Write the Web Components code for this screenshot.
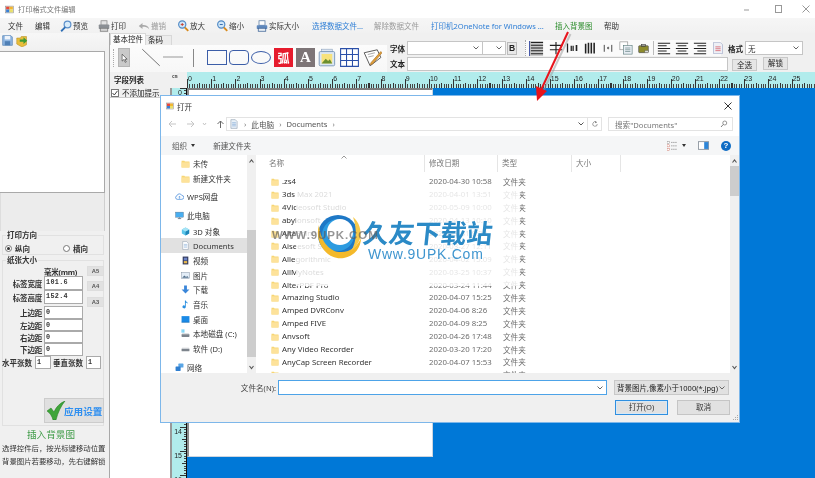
<!DOCTYPE html>
<html lang="zh">
<head>
<meta charset="utf-8">
<title>打印格式文件编辑</title>
<style>
    html, body { margin: 0; padding: 0; width: 815px; height: 478px; overflow: hidden; background: #fff; }
</style>
</head>
<body>
<app-window>
    <title-bar slot="top"></title-bar>
    <menu-bar slot="top">
        <menu-item w="27">文件</menu-item>
        <menu-item w="25">编辑</menu-item>
        <menu-item w="38" icon="glass">预览</menu-item>
        <menu-item w="40" icon="printer">打印</menu-item>
        <menu-item w="39" icon="undo" tone="off">撤销</menu-item>
        <menu-item w="39" icon="zoomin">放大</menu-item>
        <menu-item w="40" icon="zoomout">缩小</menu-item>
        <menu-item w="56" icon="actual">实际大小</menu-item>
        <menu-item w="62" tone="link">选择数据文件...</menu-item>
        <menu-item w="57" tone="off">解除数据文件</menu-item>
        <menu-item w="124" tone="link">打印机2OneNote for Windows ...</menu-item>
        <menu-item w="49" tone="go">插入背景图</menu-item>
        <menu-item w="30">帮助</menu-item>
    </menu-bar>
    <side-panel slot="side"></side-panel>
    <tool-strip slot="main"></tool-strip>
    <ruler-row slot="main"></ruler-row>
    <work-area slot="main"></work-area>
    <open-dialog slot="over"></open-dialog>
    <site-watermark slot="over"></site-watermark>
    <red-arrow slot="over"></red-arrow>
</app-window>

<script>
const FONT = `"Noto Sans", "Noto Sans CJK SC", sans-serif`;

// all the little pictures of the app, viewBox 0 0 16 16
const ICONS = {
    appicon: `<rect x="1" y="2" width="14" height="12" fill="#eee" stroke="#888"/><rect x="2" y="3" width="6" height="5" fill="#e8493a"/><rect x="8" y="3" width="6" height="5" fill="#f2b632"/><rect x="2" y="8" width="6" height="5" fill="#3a7fd5"/><rect x="8" y="8" width="6" height="5" fill="#e9e06a"/>`,
    glass: `<circle cx="10" cy="6" r="4.5" fill="#d7ebfa" stroke="#5b8fc9" stroke-width="1.6"/><path d="M7 9.5 1.5 15" stroke="#2f6fb5" stroke-width="2.4"/>`,
    printer: `<rect x="4" y="1" width="8" height="6" fill="#e4e4e4" stroke="#888"/><rect x="1" y="6" width="14" height="6" rx="1" fill="#8b8f94"/><rect x="3" y="11" width="10" height="4" fill="#d5d5d5" stroke="#777"/>`,
    undo: `<path d="M1 8 6 4v2.5c5 0 8 1.5 9 6-2-3-5-3.5-9-3.5V12z" fill="#a9a9a9"/>`,
    zoomin: `<circle cx="7" cy="6" r="4.8" fill="#cfe6f8" stroke="#4d87c4" stroke-width="1.5"/><path d="M10.5 10 15 14.5" stroke="#d88a1c" stroke-width="2.4"/><path d="M5 6h4M7 4v4" stroke="#c9402c" stroke-width="1.2"/>`,
    zoomout: `<circle cx="7" cy="6" r="4.8" fill="#cfe6f8" stroke="#4d87c4" stroke-width="1.5"/><path d="M10.5 10 15 14.5" stroke="#d88a1c" stroke-width="2.4"/><path d="M5 6h4" stroke="#2b62a8" stroke-width="1.2"/>`,
    actual: `<rect x="4" y="1" width="8" height="6" fill="#fff" stroke="#5577a0"/><rect x="1" y="7" width="14" height="5" rx="1" fill="#5f88bd"/><rect x="3" y="11" width="10" height="4" fill="#e8eef5" stroke="#3d6294"/>`,
    save: `<path d="M1 1h12l2 2v12H1z" fill="#8fb6e2" stroke="#4f7fb5"/><rect x="4" y="1.5" width="8" height="5" fill="#eef4fb"/><rect x="4" y="9" width="8" height="6" fill="#4f7fb5"/>`,
    openfile: `<path d="M1 4h5l1-2h7v11l-6 3-7-4z" fill="#e9bd3b" stroke="#b08a1e" stroke-width=".7"/><path d="M5 6h5V3l5 4.5L10 12V9H5z" fill="#3c9a35"/>`,
    cursor: `<path d="M5 2v11l2.6-2.5L10 15l1.6-.8-2.3-4.3H13z" fill="#fff" stroke="#111" stroke-width=".8"/>`,
    line: `<path d="M1 1 15 15" stroke="#444" stroke-width=".6" fill="none"/>`,
    picture: `<rect x="3" y="1" width="9" height="3" fill="#dfe8f3" stroke="#8aa0bb" stroke-width=".5"/><rect x="1" y="3" width="13" height="12" rx="1" fill="#dbe7f4" stroke="#6e8db0" stroke-width=".7"/><rect x="3" y="5" width="9" height="8" fill="#f7e27c"/><path d="M3 13l3.5-4 2 2 1.5-1.5 2 3.5z" fill="#6b8f2f"/>`,
    table: `<path d="M.5.5h15v15H.5zM.5 5.5h15M.5 10.5h15M5.5.5v15M10.5.5v15" fill="#fff" stroke="#2a4fa8" stroke-width=".9"/>`,
    pen: `<path d="M1 4 12 1.5 15 8 6 15z" fill="#fff" stroke="#555" stroke-width=".8"/><path d="M4 5.5 10 4M4.5 7.5 9 6.5" stroke="#888" stroke-width=".6"/><path d="M7 12 15 3l1 1-8 9.5L6 14z" fill="#e2a23a" stroke="#a2661a" stroke-width=".5"/>`,
    alignA: `<path d="M.5 0v16" stroke="#2b3f9e"/><rect x="1" y="0" width="14" height="16" fill="#c9c9c9"/><path d="M2 1.5h13M2 4.5h13M2 7.5h13M2 10.5h13M2 13.5h13" stroke="#222" stroke-width="1.1"/>`,
    alignB: `<path d="M1 5h14M1 10h14" stroke="#222" stroke-width="1.3"/><path d="M8 1v14" stroke="#222" stroke-width="1.3"/>`,
    alignC: `<path d="M2 2v12" stroke="#222" stroke-width="1.7"/><path d="M7 5v7M9.5 5v7" stroke="#222" stroke-width="1.7"/><path d="M14 4v8" stroke="#222" stroke-width="2.2"/>`,
    alignD: `<path d="M2 2v12M5.5 1v13M9 1v13M12.5 1v13" stroke="#222" stroke-width="1.9"/>`,
    alignE: `<path d="M2 3v11M14 3v11" stroke="#222" stroke-width="1.3"/><path d="M7 6l2 2-2 2z" fill="#222"/><path d="M9 6v4" stroke="#222"/>`,
    pages: `<rect x="1" y="1" width="9" height="9" fill="#fff" stroke="#888" stroke-width=".7"/><rect x="5" y="5" width="10" height="10" fill="#e8eef4" stroke="#5a7a7a" stroke-width=".7"/><path d="M7 8h6M7 10h6M7 12h6" stroke="#5a7a7a" stroke-width=".7"/>`,
    olive: `<rect x="1" y="4" width="14" height="10" rx="1" fill="#8d8b2c" stroke="#555"/><rect x="5" y="2" width="6" height="3" fill="none" stroke="#444"/><rect x="10" y="11" width="5" height="3" fill="#ddd" stroke="#555" stroke-width=".5"/>`,
    textL: `<path d="M1 2.5h14M1 5.5h10M1 8.5h14M1 11.5h10M1 14.5h14" stroke="#222" stroke-width="1.2"/>`,
    textC: `<path d="M1 2.5h14M3 5.5h10M1 8.5h14M3 11.5h10M1 14.5h14" stroke="#222" stroke-width="1.2"/>`,
    textR: `<path d="M1 2.5h14M5 5.5h10M1 8.5h14M5 11.5h10M1 14.5h14" stroke="#222" stroke-width="1.2"/>`,
    redpage: `<path d="M2 .5h9l3 3v12H2z" fill="#eef0f6" stroke="#9aa5c4" stroke-width=".8"/><path d="M4.5 6.5h7M4.5 9h7M4.5 11.5h7" stroke="#d8626c" stroke-width="1.1"/>`,
    folder: `<path d="M1 3h5l1 1.5h8V15H1z" fill="#f7d675"/><path d="M1 6h14v9H1z" fill="#fde29a"/>`,
    cloud: `<path d="M4 13a3.2 3.2 0 0 1-.5-6.3A4.5 4.5 0 0 1 12 6a3.5 3.5 0 0 1 0 7z" fill="#fff" stroke="#3f86d8" stroke-width="1.3"/><path d="M8 12V8M6 9.5 8 7.5l2 2" stroke="#3f86d8" fill="none"/>`,
    pc: `<rect x="1" y="2" width="14" height="9" fill="#48aef0" stroke="#5a6f85" stroke-width=".7"/><path d="M5 13.5h6" stroke="#5a6f85" stroke-width="1.5"/><path d="M8 11v2" stroke="#5a6f85"/>`,
    cube: `<path d="M8 1 14.5 4.5v7L8 15 1.5 11.5v-7z" fill="#5cc6ea"/><path d="M8 8v7l6.5-3.5v-7z" fill="#1f86b8"/><path d="M8 8 1.5 4.5 8 1l6.5 3.5z" fill="#a7e4f6"/>`,
    doc: `<path d="M3 1h7l3 3v11H3z" fill="#fff" stroke="#7d8ea0" stroke-width=".8"/><path d="M5 6h6M5 8.5h6M5 11h6" stroke="#5b8fc9" stroke-width=".8"/>`,
    video: `<rect x="3" y="1" width="10" height="14" fill="#333a5c"/><rect x="5" y="3" width="6" height="5" fill="#6d84c7"/><rect x="5" y="9" width="6" height="4" fill="#e7b84c"/>`,
    photos: `<rect x="1" y="2.5" width="14" height="11" fill="#e3edf7" stroke="#6a7d90" stroke-width=".7"/><path d="M2 12l4-4 3 2.5 2-1.5 3 3z" fill="#54718d"/>`,
    down: `<path d="M5.5 1h5v7H15l-7 7-7-7h4.5z" fill="#3a86d9"/>`,
    music: `<path d="M7 1h1.5c.5 3 4 3 4 6-1-1.5-2.5-2-4-2v7.5A3 2.6 0 1 1 7 10z" fill="#2a8fe0"/>`,
    desktop: `<rect x="1" y="2" width="14" height="11" fill="#1a8ae6"/><path d="M1 13h14" stroke="#0b5fa8"/>`,
    diskc: `<path d="M1 1h2v2H1zM4 1h2v2H4zM1 4h2v2H1zM4 4h2v2H4z" fill="#22b8f0"/><rect x="1" y="9" width="14" height="5" rx="1" fill="#7d848c"/><rect x="2" y="7.5" width="12" height="2" fill="#d5d8dc"/>`,
    diskd: `<rect x="1" y="8" width="14" height="5" rx="1" fill="#7d848c"/><rect x="2" y="6.5" width="12" height="2" fill="#d5d8dc"/>`,
    net: `<rect x="6" y="1" width="9" height="7" rx="1" fill="#5aa6e6"/><rect x="1" y="6" width="9" height="8" rx="1" fill="#2f7fd0"/>`,
    views: `<rect x="0" y="2" width="4" height="3" fill="#fff" stroke="#777" stroke-width=".6"/><rect x="0" y="7" width="4" height="3" fill="#fff" stroke="#c65c4c" stroke-width=".6"/><rect x="0" y="12" width="4" height="3" fill="#fff" stroke="#c65c4c" stroke-width=".6"/><path d="M6 3.5h9M6 8.5h9M6 13.5h9" stroke="#666" stroke-dasharray="2 1" stroke-width=".9"/>`,
    pane: `<rect x=".5" y="2.5" width="15" height="11" fill="#fff" stroke="#6c7783"/><rect x="9" y="3" width="6" height="10" fill="#2e86d8"/>`,
    search: `<circle cx="9.5" cy="6" r="4" fill="none" stroke="#555" stroke-width="1.2"/><path d="M6.5 9 2 14" stroke="#555" stroke-width="1.5"/>`,
    refresh: `<path d="M12.5 8a4.5 4.5 0 1 1-2-3.7" fill="none" stroke="#666" stroke-width="1.2"/><path d="M8.5 2 12 4.3 8.8 6.5z" fill="#666"/>`,
    pcdoc: `<path d="M3 1h7l3 3v11H3z" fill="#e8f0f8" stroke="#7d8ea0" stroke-width=".8"/><path d="M5 6h6M5 8.5h6M5 11h6" stroke="#5b8fc9" stroke-width=".8"/>`
};

const CHEVRON = `<svg class="chev" viewBox="0 0 6 4"><path d="M.5.5 3 3 5.5.5" fill="none" stroke="#666"/></svg>`;

// shorthand for the elements that are only a template
function shadowElement(tag, html) {
    const tpl = document.createElement("template");
    tpl.innerHTML = html;
    customElements.define(tag, class extends HTMLElement {
        constructor() {
            super();
            this.attachShadow({mode: "open"});
            this.shadowRoot.appendChild(tpl.content.cloneNode(true));
        }
    });
}

// tool-ico
class ToolIco extends HTMLElement {
    constructor() {
        super();
        this.attachShadow({mode: "open"});
    }
    connectedCallback() {
        const size = this.getAttribute("size") || 12;
        const high = this.getAttribute("high") || size;
        this.shadowRoot.innerHTML = /*html*/`
            <style>
                :host { display: block; flex: none; width: ${size}px; height: ${high}px; }
                svg { display: block; width: 100%; height: 100%; }
            </style>
            <svg viewBox="0 0 16 16" preserveAspectRatio="none">${ICONS[this.getAttribute("name")] || ""}</svg>`;
    }
}
customElements.define("tool-ico", ToolIco);

// app-window
shadowElement("app-window", /*html*/`
    <style>
        :host {
            display: block;
            position: relative;
            width: 815px;
            height: 478px;
            overflow: hidden;
            background: #f0f0f0;
            font-family: ${FONT};
            font-size: 7.5px;
            color: #222;
            filter: blur(.35px);
        }
        .rows { display: flex; height: 445px; }
        .main { flex: 1; min-width: 0; display: flex; flex-direction: column; }
    </style>
    <slot name="top"></slot>
    <div class="rows">
        <slot name="side"></slot>
        <div class="main"><slot name="main"></slot></div>
    </div>
    <slot name="over"></slot>
`);

// title-bar
shadowElement("title-bar", /*html*/`
    <style>
        :host { display: flex; align-items: center; height: 18px; background: #fff; padding-left: 5px; box-sizing: border-box; color: #777; font-size: 7.2px; }
        span { margin-left: 4px; flex: 1; }
        .ctl { display: flex; align-items: center; }
        svg { display: block; width: 9px; height: 9px; }
    </style>
    <tool-ico name="appicon" size="9"></tool-ico>
    <span>打印格式文件编辑</span>
    <div class="ctl">
        <svg viewBox="0 0 9 9" style="margin-right:22px"><path d="M0 5h5" stroke="#999"/></svg>
        <svg viewBox="0 0 9 9" style="margin-right:18px"><rect x=".5" y=".5" width="6" height="7" fill="none" stroke="#999"/></svg>
        <svg viewBox="0 0 9 9" style="margin-right:4px"><path d="M.5.5l7 7M7.5.5l-7 7" stroke="#999"/></svg>
    </div>
`);

// menu-bar
shadowElement("menu-bar", /*html*/`
    <style>
        :host { display: flex; align-items: center; height: 15px; padding-left: 8px; background: linear-gradient(#f6f6f6, #f1f1f1); }
    </style>
    <slot></slot>
`);

// menu-item
class MenuItem extends HTMLElement {
    constructor() {
        super();
        this.attachShadow({mode: "open"});
    }
    connectedCallback() {
        const icon = this.getAttribute("icon");
        const tones = {off: "#9a9a9a", link: "#2f7fd6", go: "#2f8f2f"};
        this.shadowRoot.innerHTML = /*html*/`
            <style>
                :host {
                    display: flex;
                    align-items: center;
                    gap: 1px;
                    flex: none;
                    width: ${this.getAttribute("w")}px;
                    white-space: nowrap;
                    color: ${tones[this.getAttribute("tone")] || "#333"};
                }
            </style>
            ${icon ? `<tool-ico name="${icon}" size="12"></tool-ico>` : ""}
            <slot></slot>`;
    }
}
customElements.define("menu-item", MenuItem);

// side-panel
shadowElement("side-panel", /*html*/`
    <style>
        :host {
            display: block;
            flex: none;
            width: 110px;
            box-sizing: border-box;
            border-right: 1px solid #a8a8a8;
            background: #f0f0f0;
            color: #333;
        }
        .icons { display: flex; gap: 3px; height: 18px; box-sizing: border-box; padding: 0 0 3px 2px; align-items: center; background: linear-gradient(#f7f7f7, #f0f0f0); }
        .list { height: 142px; width: 105px; box-sizing: border-box; background: #fff; border: 1px solid #a9a9a9; border-left: 0; }
        .inset { height: 38px; width: 105px; box-sizing: border-box; border-right: 1px solid #cfcfcf; border-left: 1px solid #ddd; background: #ececec; }
        .box { margin: 4px 5px 0 2px; border: 1px solid #e1e1e1; }
        .legend { display: block; width: max-content; margin: -6px 0 0 3px; padding: 0 1px; background: #f0f0f0; font-weight: 700; line-height: 10px; }
        .dir { display: flex; align-items: center; height: 12px; margin-top: 2px; padding-left: 2px; font-weight: 700; }
        .radio { width: 7px; height: 7px; border: 1px solid #777; border-radius: 50%; background: #fff; box-sizing: border-box; margin-right: 3px; display: grid; place-items: center; }
        .radio.on::after { content: ""; width: 3px; height: 3px; border-radius: 50%; background: #333; }
        .paper { display: grid; grid-template-columns: 41px 39px 1fr; grid-template-rows: 10px 14px 14px 2px 13px 12px 12px 13px; margin-top: 1px; height: 159px; align-content: start; font-weight: 700; }
        .lab { text-align: right; padding-right: 2px; align-self: center; white-space: nowrap; letter-spacing: -.2px; }
        .head { grid-column: 2; white-space: nowrap; align-self: center; letter-spacing: -.3px; }
        .field {
            box-sizing: border-box;
            background: #fff;
            border: 1px solid #aaa;
            padding-left: 1px;
            font: 700 6.8px/10px "Liberation Mono", monospace;
            letter-spacing: .3px;
            white-space: nowrap;
        }
        .a {
            box-sizing: border-box;
            width: 17px;
            height: 10px;
            margin-left: 4px;
            background: #e1e1e1;
            border: 1px solid #ddd;
            font: 700 5.8px/8px "Liberation Sans", sans-serif;
            text-align: center;
            color: #555;
        }
        .count { grid-column: 1 / -1; display: flex; align-items: center; height: 13px; margin-left: -1px; white-space: nowrap; }
        .count .field { height: 13px; width: 16px; margin: 0 2px 0 3px; }
        .apply {
            grid-column: 1 / -1;
            box-sizing: border-box;
            width: 60px;
            height: 25px;
            margin: 29px 0 0 41px;
            display: flex;
            align-items: center;
            background: #e0e0e0;
            border: 1px solid #ccc;
            color: #2f8ff0;
            font-size: 9.6px;
            font-weight: 700;
            white-space: nowrap;
        }
        .apply svg { width: 20px; height: 19px; flex: none; margin-left: 1px; margin-right: -2px; }
        h4 { margin: 2px 0 1px; text-align: center; color: #3c9a45; font-size: 9.6px; font-weight: 400; line-height: 13px; width: 102px; }
        p { margin: 0; white-space: nowrap; line-height: 13px; padding-left: 2px; font-size: 7.4px; color: #333; }
    </style>
    <div class="icons"><tool-ico name="save" size="11"></tool-ico><tool-ico name="openfile" size="12"></tool-ico></div>
    <div class="list"></div>
    <div class="inset"></div>
    <div class="box">
        <span class="legend">打印方向</span>
        <div class="dir"><span class="radio on"></span>纵向<span style="width:33px"></span><span class="radio"></span>横向</div>
    </div>
    <div class="box" style="margin-top:5px">
        <span class="legend">纸张大小</span>
        <div class="paper">
            <span class="head">毫米(mm)</span><span class="a" style="grid-column:3">A5</span>
            <span class="lab">标签宽度</span><span class="field">101.6</span><span class="a" style="margin-top:5px">A4</span>
            <span class="lab">标签高度</span><span class="field">152.4</span><span class="a" style="margin-top:7px">A3</span>
            <span style="grid-column:1/-1"></span>
            <span class="lab">上边距</span><span class="field" style="grid-column:2">0</span><span></span>
            <span class="lab">左边距</span><span class="field" style="grid-column:2">0</span><span></span>
            <span class="lab">右边距</span><span class="field" style="grid-column:2">0</span><span></span>
            <span class="lab">下边距</span><span class="field" style="grid-column:2">0</span><span></span>
            <div class="count">水平张数<span class="field">1</span>垂直张数<span class="field" style="width:15px;margin-right:0">1</span></div>
            <div class="apply">
                <svg viewBox="0 0 20 19"><path d="M1 10l4-3 3 4c2-5 6-9 11-11-4 5-7 11-9 19H7C6 15 4 12 1 10z" fill="#3fa53a" stroke="#1e7a1c" stroke-width=".5"/></svg>
                应用设置
            </div>
        </div>
    </div>
    <h4>插入背景图</h4>
    <p>选择控件后，按光标键移动位置</p>
    <p>背景图片若要移动，先右键解锁</p>
`);

// tool-strip
shadowElement("tool-strip", /*html*/`
    <style>
        :host { display: flex; height: 39px; background: #f0f0f0; }
        .tabs-wrap { flex: none; width: 277px; display: flex; flex-direction: column; }
        .tabs { display: flex; height: 12px; align-items: flex-end; background: #f0f0f0; }
        .tab { height: 12px; line-height: 11px; padding: 0 2px; width: 36px; box-sizing: border-box; background: #fdfdfd; border: 1px solid #d8d8d8; border-bottom: 0; white-space: nowrap; }
        .tab + .tab { height: 10px; line-height: 9px; width: 26px; background: #ececec; border-left: 0; }
        .bar { flex: 1; display: flex; align-items: center; background: linear-gradient(#fcfcfc, #f7f7f7); padding-bottom: 2px; box-sizing: border-box; }
        .grip { width: 1px; height: 18px; margin: 0 3px 0 3px; border-left: 1px dotted #aaa; }
        .on { width: 12px; height: 19px; display: grid; place-items: center; background: #c9c9c9; border: 1px solid #b5b5b5; box-sizing: border-box; margin-right: 11px; }
        .shape { flex: none; box-sizing: border-box; width: 20px; height: 15px; border: 1px solid #3c5ea8; margin-right: 2px; }
        .hu, .aa { flex: none; width: 19px; height: 19px; margin-right: 3px; display: grid; place-items: center; color: #fff; font-weight: 700; }
        .hu { background: #e61b2d; font: 700 12px "Noto Sans CJK SC", sans-serif; }
        .aa { background: #7d7577; font: 700 15px "Liberation Serif", serif; }
        .sep { flex: none; width: 1px; height: 18px; background: #888; }
        .mid { flex: 1; display: flex; flex-direction: column; padding: 7px 0 0 3px; box-sizing: border-box; font-weight: 700; }
        .r1, .r2 { display: flex; align-items: center; }
        .r1 { height: 16px; }
        .r2 { height: 15px; }
        .lab { width: 17px; flex: none; }
        .sel { box-sizing: border-box; height: 14px; background: #fff; border: 1px solid #c5c5c5; display: flex; align-items: center; justify-content: flex-end; padding-right: 3px; font-weight: 400; color: #333; }
        .chev { width: 6px; height: 4px; flex: none; }
        .b { box-sizing: border-box; width: 10px; height: 13px; margin-left: 1px; border: 1px solid #bbb; background: #e8e8e8; font: 700 8.5px/11px "Liberation Sans", sans-serif; text-align: center; }
        .icons { display: flex; align-items: center; height: 16px; margin-left: 8px; padding-left: 3px; background: #fafafa; border-left: 1px dotted #aaa; width: 196px; box-sizing: border-box; flex: none; }
        .input { box-sizing: border-box; width: 321px; height: 14px; background: #fff; border: 1px solid #c5c5c5; flex: none; }
        .btn { box-sizing: border-box; width: 25px; height: 12px; background: #e6e6e6; border: 1px solid #c8c8c8; text-align: center; line-height: 10px; font-weight: 400; flex: none; white-space: nowrap; }
    </style>
    <div class="tabs-wrap">
        <div class="tabs"><span class="tab">基本控件</span><span class="tab">条码</span></div>
        <div class="bar">
            <span class="grip"></span>
            <span class="on"><tool-ico name="cursor" size="10"></tool-ico></span>
            <tool-ico name="line" size="20" high="19" style="margin-right:2px"></tool-ico>
            <svg width="20" height="3" style="margin-right:10px;flex:none"><path d="M0 1h20" stroke="#999"/></svg>
            <span class="sep" style="margin-right:13px"></span>
            <span class="shape"></span>
            <span class="shape" style="border-radius:4px"></span>
            <span class="shape" style="border-radius:50%;height:13px;margin-right:3px"></span>
            <span class="hu">弧</span>
            <span class="aa">A</span>
            <tool-ico name="picture" size="19" style="margin-right:3px"></tool-ico>
            <tool-ico name="table" size="19" style="margin-right:4px"></tool-ico>
            <tool-ico name="pen" size="19"></tool-ico>
        </div>
    </div>
    <div class="mid">
        <div class="r1">
            <span class="lab">字体</span>
            <span class="sel" style="width:76px">${CHEVRON}</span>
            <span class="sel" style="width:23px;border-left:0">${CHEVRON}</span>
            <span class="b">B</span>
            <div class="icons">
                <tool-ico name="alignA" size="15" style="margin-right:5px"></tool-ico>
                <tool-ico name="alignB" size="14" style="margin-right:3px"></tool-ico>
                <tool-ico name="alignC" size="12" style="margin-right:6px"></tool-ico>
                <tool-ico name="alignD" size="13" style="margin-right:6px"></tool-ico>
                <tool-ico name="alignE" size="10" style="margin-right:6px"></tool-ico>
                <tool-ico name="pages" size="14" style="margin-right:5px"></tool-ico>
                <tool-ico name="olive" size="11" style="margin-right:4px"></tool-ico>
                <span class="sep" style="height:14px;margin-right:3px;background:#bbb"></span>
                <tool-ico name="textL" size="14" style="margin-right:4px"></tool-ico>
                <tool-ico name="textC" size="14" style="margin-right:4px"></tool-ico>
                <tool-ico name="textR" size="14" style="margin-right:5px"></tool-ico>
                <tool-ico name="redpage" size="12"></tool-ico>
            </div>
            <span style="width:15px;margin-left:7px;flex:none;white-space:nowrap">格式</span>
            <span class="sel" style="width:58px;margin-left:2px;justify-content:space-between;padding-left:2px">无${CHEVRON}</span>
        </div>
        <div class="r2">
            <span class="lab">文本</span>
            <span class="input"></span>
            <span class="btn" style="margin:2px 0 0 4px">全选</span>
            <span class="btn" style="margin-left:6px;height:13px">解锁</span>
        </div>
    </div>
`);

// ruler-row
shadowElement("ruler-row", /*html*/`
    <style>
        :host { display: flex; height: 16px; background: #f0f0f0; }
        .name { flex: none; width: 62px; box-sizing: border-box; padding: 2px 0 0 4px; font-weight: 700; line-height: 12px; }
        .cm { flex: none; width: 15px; padding-top: 1px; font: 700 4.5px/8px "Liberation Mono", monospace; color: #444; }
        h-ruler { flex: 1; }
    </style>
    <span class="name">字段列表</span>
    <span class="cm">cm</span>
    <h-ruler></h-ruler>
`);

// h-ruler
class HRuler extends HTMLElement {
    constructor() {
        super();
        const root = this.attachShadow({mode: "open"});
        let cells = "";
        for (let i = 0; i < 26; i++) cells += `<span>${i}</span>`;
        root.innerHTML = /*html*/`
            <style>
                :host {
                    display: flex;
                    overflow: hidden;
                    background-color: #b1ecec;
                    background-image:
                        repeating-linear-gradient(90deg, #333 0 1px, transparent 1px 24.2px),
                        repeating-linear-gradient(90deg, #333 0 1px, transparent 1px 12.1px),
                        repeating-linear-gradient(90deg, #444 0 1px, transparent 1px 2.42px);
                    background-repeat: no-repeat;
                    background-size: 100% 9px, 100% 5px, 100% 4px;
                    background-position: 0 100%;
                }
                span { flex: none; width: 24.2px; padding-left: 1px; box-sizing: border-box; font: 7px/13px "Liberation Sans", sans-serif; color: #222; }
            </style>
            ${cells}`;
    }
}
customElements.define("h-ruler", HRuler);

// v-ruler, only the part below the dialog has readable numbers
class VRuler extends HTMLElement {
    constructor() {
        super();
        const root = this.attachShadow({mode: "open"});
        let cells = "";
        for (let i = 0; i < 17; i++) cells += `<span>${i === 0 || i >= 14 ? i : ""}</span>`;
        root.innerHTML = /*html*/`
            <style>
                :host {
                    display: block;
                    flex: none;
                    width: 16px;
                    box-sizing: border-box;
                    overflow: hidden;
                    border-left: 1px solid #999;
                    border-right: 1px solid #111;
                    background-color: #b1ecec;
                    background-image:
                        repeating-linear-gradient(180deg, #333 0 1px, transparent 1px 24.2px),
                        repeating-linear-gradient(180deg, #333 0 1px, transparent 1px 12.1px),
                        repeating-linear-gradient(180deg, #444 0 1px, transparent 1px 2.42px);
                    background-repeat: no-repeat;
                    background-size: 6px 100%, 4px 100%, 2px 100%;
                    background-position: 100% 0;
                }
                span { display: block; height: 24.2px; box-sizing: border-box; padding: 1px 4px 0 0; text-align: right; font: 7px/8px "Liberation Sans", sans-serif; color: #222; }
            </style>
            ${cells}`;
    }
}
customElements.define("v-ruler", VRuler);

// work-area
shadowElement("work-area", /*html*/`
    <style>
        :host { display: flex; flex: 1; min-height: 0; }
        .fields { flex: none; width: 61px; box-sizing: border-box; border-right: 1px solid #999; display: flex; flex-direction: column; }
        .check { height: 9px; display: flex; align-items: center; padding-left: 1px; white-space: nowrap; }
        .tick { width: 8px; height: 8px; box-sizing: border-box; border: 1px solid #777; background: #fff; margin-right: 3px; flex: none; }
        .tick svg { display: block; width: 6px; height: 6px; }
        .fieldlist { flex: 1; background: #fff; border-top: 1px solid #ccc; }
        .canvas { flex: 1; background: #0078d7; }
        .paper { box-sizing: border-box; width: 246px; height: 369px; background: #fff; border: 1px solid #cdd5df; border-top: 2px solid #7d7d7d; border-left: 2px solid #8c8c8c; }
    </style>
    <div class="fields">
        <div class="check"><span class="tick"><svg viewBox="0 0 6 6"><path d="M.5 3 2.3 5 5.5 .8" fill="none" stroke="#444"/></svg></span>不添加提示</div>
        <div class="fieldlist"></div>
    </div>
    <v-ruler></v-ruler>
    <div class="canvas"><div class="paper"></div></div>
`);

// open-dialog
shadowElement("open-dialog", /*html*/`
    <style>
        :host {
            position: absolute;
            left: 160px;
            top: 95px;
            width: 580px;
            height: 328px;
            box-sizing: border-box;
            border: 1px solid #7db7ea;
            background: #fff;
            display: flex;
            flex-direction: column;
            font-size: 7.6px;
            color: #333;
        }
        .title { display: flex; align-items: center; height: 20px; padding: 0 5px; flex: none; }
        .title span { margin-left: 3px; flex: 1; }
        .addr { display: flex; align-items: center; height: 14px; flex: none; margin-top: 1px; color: #555; }
        .nav-btn { display: flex; align-items: center; padding-left: 7px; width: 65px; box-sizing: border-box; flex: none; gap: 9px; }
        .nav-btn svg { width: 9px; height: 8px; flex: none; }
        .path { box-sizing: border-box; width: 362px; height: 14px; flex: none; border: 1px solid #e3e3e3; display: flex; align-items: center; padding-left: 2px; white-space: nowrap; }
        .path b { font-weight: 400; margin: 0 5px; color: #777; }
        .path i { flex: 1; }
        .refresh { width: 14px; height: 14px; flex: none; box-sizing: border-box; border: 1px solid #e3e3e3; border-left: 0; display: grid; place-items: center; }
        .search { box-sizing: border-box; width: 125px; height: 14px; margin-left: 6px; flex: none; border: 1px solid #e3e3e3; display: flex; align-items: center; justify-content: space-between; padding: 0 4px 0 6px; color: #777; white-space: nowrap; }
        .tools { display: flex; align-items: center; height: 19px; margin-top: 5px; flex: none; background: #f5f6f7; padding-left: 11px; color: #555; white-space: nowrap; }
        .tri { width: 0; height: 0; border: 2.5px solid transparent; border-top: 3px solid #333; border-bottom: 0; margin-left: 4px; }
        .right { margin-left: auto; display: flex; align-items: center; margin-right: 8px; }
        .help { width: 10px; height: 10px; margin-left: 12px; border-radius: 50%; background: #0f6cc4; color: #fff; font: 700 8px/10px "Liberation Sans", sans-serif; text-align: center; }
        .body { display: flex; height: 218px; flex: none; background: #fff; }
        .tree { flex: none; width: 86px; padding-top: 1px; overflow: hidden; }
        .files { flex: 1; min-width: 0; overflow: hidden; }
        .heads { display: flex; height: 17px; color: #777; margin-bottom: 3px; position: relative; }
        .heads span { box-sizing: border-box; padding-left: 4px; border-right: 1px solid #e5e5e5; line-height: 16px; flex: none; }
        .heads svg { position: absolute; left: 85px; top: 0; width: 6px; height: 4px; }
        .foot { flex: 1; background: #f0f0f0; position: relative; }
        .foot-r { display: flex; align-items: center; padding-top: 7px; }
        .foot label { width: 117px; text-align: right; flex: none; padding-right: 2px; box-sizing: border-box; color: #444; white-space: nowrap; }
        .name { box-sizing: border-box; width: 329px; height: 15px; background: #fff; border: 1px solid #4da3e8; display: flex; align-items: center; justify-content: flex-end; padding-right: 3px; }
        .filter { box-sizing: border-box; width: 115px; height: 15px; margin-left: 7px; background: #e1e1e1; border: 1px solid #c8c8c8; display: flex; align-items: center; justify-content: space-between; padding: 0 3px 0 2px; white-space: nowrap; flex: none; color: #222; font-size: 7.5px; }
        .chev { width: 6px; height: 4px; flex: none; }
        .btns { display: flex; margin: 5px 0 0 454px; gap: 9px; }
        .btns span { box-sizing: border-box; height: 15px; width: 53px; background: #e1e1e1; border: 1px solid #c5c5c5; text-align: center; line-height: 13px; }
        .btns span:first-child { border: 1px solid #2f8fe0; box-shadow: inset 0 0 0 1px #d8e8f5; }
        .grip { position: absolute; right: 1px; bottom: 1px; width: 6px; height: 6px; }
    </style>
    <div class="title"><tool-ico name="appicon" size="8"></tool-ico><span>打开</span>
        <svg width="8" height="8" viewBox="0 0 8 8" style="margin-right:2px"><path d="M.5.5l7 7M7.5.5l-7 7" stroke="#333"/></svg>
    </div>
    <div class="addr">
        <div class="nav-btn">
            <svg viewBox="0 0 9 8"><path d="M8 4H1M4 1 1 4l3 3" fill="none" stroke="#c5c5c5"/></svg>
            <svg viewBox="0 0 9 8"><path d="M1 4h7M5 1l3 3-3 3" fill="none" stroke="#c5c5c5"/></svg>
            <svg viewBox="0 0 9 8" style="margin-left:-4px;margin-right:-2px"><path d="M3 3l1.5 2L6 3" fill="none" stroke="#c5c5c5"/></svg>
            <svg viewBox="0 0 9 8"><path d="M4.5 8V1M1.5 4l3-3 3 3" fill="none" stroke="#666"/></svg>
        </div>
        <div class="path"><tool-ico name="pcdoc" size="10"></tool-ico><b>›</b>此电脑<b>›</b>Documents<b>›</b><i></i>
            <svg width="6" height="4" viewBox="0 0 6 4" style="margin-right:3px"><path d="M.5.5 3 3 5.5.5" fill="none" stroke="#555"/></svg>
        </div>
        <div class="refresh"><tool-ico name="refresh" size="8"></tool-ico></div>
        <div class="search">搜索"Documents"<tool-ico name="search" size="8"></tool-ico></div>
    </div>
    <div class="tools">
        组织<span class="tri"></span>
        <span style="margin-left:18px">新建文件夹</span>
        <div class="right">
            <tool-ico name="views" size="11"></tool-ico><span class="tri"></span>
            <tool-ico name="pane" size="11" style="margin-left:12px"></tool-ico>
            <span class="help">?</span>
        </div>
    </div>
    <div class="body">
        <div class="tree">
            <nav-row icon="folder" deep="20">未传</nav-row>
            <nav-row icon="folder" deep="20" style="margin-bottom:4px">新建文件夹</nav-row>
            <nav-row icon="cloud" deep="14" style="margin-bottom:4px">WPS网盘</nav-row>
            <nav-row icon="pc" deep="14" style="margin-bottom:1px">此电脑</nav-row>
            <nav-row icon="cube" deep="20">3D 对象</nav-row>
            <nav-row icon="doc" deep="20" selected>Documents</nav-row>
            <nav-row icon="video" deep="20">视频</nav-row>
            <nav-row icon="photos" deep="20">图片</nav-row>
            <nav-row icon="down" deep="20">下载</nav-row>
            <nav-row icon="music" deep="20">音乐</nav-row>
            <nav-row icon="desktop" deep="20">桌面</nav-row>
            <nav-row icon="diskc" deep="20">本地磁盘 (C:)</nav-row>
            <nav-row icon="diskd" deep="20" style="margin-bottom:4px">软件 (D:)</nav-row>
            <nav-row icon="net" deep="14">网络</nav-row>
        </div>
        <scroll-rail thumb-top="75" thumb-high="127"></scroll-rail>
        <div class="files">
            <div class="heads">
                <span style="width:169px;padding-left:13px">名称</span>
                <span style="width:73px">修改日期</span>
                <span style="width:74px">类型</span>
                <span style="width:49px">大小</span>
                <svg viewBox="0 0 6 4"><path d="M.5 3.5 3 1l2.5 2.5" fill="none" stroke="#999"/></svg>
            </div>
            <file-row date="2020-04-30 10:58">.zs4</file-row>
            <file-row date="2020-04-01 13:51">3ds Max 2021</file-row>
            <file-row date="2020-05-09 10:00">4Videosoft Studio</file-row>
            <file-row date="2020-04-13 10:10">abylonsoft</file-row>
            <file-row date="2020-03-31 9:28">AltaShine</file-row>
            <file-row date="2020-03-27 12:11">Aiseesoft Studio</file-row>
            <file-row date="2020-04-02 15:09">Allegorithmic</file-row>
            <file-row date="2020-03-25 10:37">AllMyNotes</file-row>
            <file-row date="2020-03-24 11:44">AlterPDF Pro</file-row>
            <file-row date="2020-04-07 15:25">Amazing Studio</file-row>
            <file-row date="2020-04-06 8:26">Amped DVRConv</file-row>
            <file-row date="2020-04-09 8:25">Amped FIVE</file-row>
            <file-row date="2020-04-26 17:48">Anvsoft</file-row>
            <file-row date="2020-03-20 17:20">Any Video Recorder</file-row>
            <file-row date="2020-04-07 15:53">AnyCap Screen Recorder</file-row>
            <file-row date="2020-04-11 9:06">Apowersoft</file-row>
        </div>
        <scroll-rail thumb-top="11" thumb-high="30"></scroll-rail>
    </div>
    <div class="foot">
        <div class="foot-r">
            <label>文件名(N):</label>
            <div class="name">${CHEVRON}</div>
            <div class="filter">背景图片,像素小于1000(*.jpg)${CHEVRON}</div>
        </div>
        <div class="btns"><span>打开(O)</span><span>取消</span></div>
        <svg class="grip" viewBox="0 0 6 6"><path d="M5 0h1v1H5zM3 2h1v1H3zM5 2h1v1H5zM1 4h1v1H1zM3 4h1v1H3zM5 4h1v1H5z" fill="#aaa"/></svg>
    </div>
`);

// nav-row
class NavRow extends HTMLElement {
    constructor() {
        super();
        this.attachShadow({mode: "open"});
    }
    connectedCallback() {
        const on = this.hasAttribute("selected");
        this.shadowRoot.innerHTML = /*html*/`
            <style>
                :host {
                    display: flex;
                    align-items: center;
                    gap: 3px;
                    height: 14.7px;
                    padding-left: ${this.getAttribute("deep")}px;
                    background: ${on ? "#e1e1e1" : "transparent"};
                    white-space: nowrap;
                    color: #333;
                }
            </style>
            <tool-ico name="${this.getAttribute("icon")}" size="9"></tool-ico>
            <slot></slot>`;
    }
}
customElements.define("nav-row", NavRow);

// file-row
class FileRow extends HTMLElement {
    constructor() {
        super();
        this.attachShadow({mode: "open"});
    }
    connectedCallback() {
        this.shadowRoot.innerHTML = /*html*/`
            <style>
                :host { display: flex; align-items: center; height: 12.9px; padding-left: 15px; white-space: nowrap; }
                .name { flex: none; width: 147px; margin-left: 3px; color: #333; overflow: hidden; font-size: 7.8px; }
                .date { flex: none; width: 74px; color: #6d6d6d; font-size: 7.8px; }
                .kind { color: #6d6d6d; }
            </style>
            <tool-ico name="folder" size="8" high="9"></tool-ico>
            <span class="name"><slot></slot></span>
            <span class="date">${this.getAttribute("date")}</span>
            <span class="kind">文件夹</span>`;
    }
}
customElements.define("file-row", FileRow);

// scroll-rail
class ScrollRail extends HTMLElement {
    constructor() {
        super();
        this.attachShadow({mode: "open"});
    }
    connectedCallback() {
        this.shadowRoot.innerHTML = /*html*/`
            <style>
                :host { display: flex; flex-direction: column; flex: none; width: 9px; background: #f0f0f0; }
                svg { width: 9px; height: 11px; flex: none; display: block; }
                .gap { flex: none; height: ${this.getAttribute("thumb-top") - 11}px; }
                .thumb { flex: none; height: ${this.getAttribute("thumb-high")}px; background: #cdcdcd; }
                .rest { flex: 1; }
            </style>
            <svg viewBox="0 0 9 11"><path d="M2.5 7.5 4.5 5l2 2.5" fill="none" stroke="#555" stroke-width="1.1"/></svg>
            <div class="gap"></div><div class="thumb"></div><div class="rest"></div>
            <svg viewBox="0 0 9 11"><path d="M2.5 4 4.5 6.5l2-2.5" fill="none" stroke="#555" stroke-width="1.1"/></svg>`;
    }
}
customElements.define("scroll-rail", ScrollRail);

// site-watermark, sits over the open dialog
shadowElement("site-watermark", /*html*/`
    <style>
        :host {
            position: absolute;
            left: 296px;
            top: 189px;
            width: 224px;
            height: 97px;
            background: rgba(255,255,255,.82);
            pointer-events: none;
        }
        .inner { display: flex; height: 100%; padding: 23px 0 0 18px; box-sizing: border-box; }
        svg { flex: none; width: 50px; height: 52px; margin-top: -1px; }
        .txt { margin-left: -1px; margin-top: 6px; }
        .cn { font: 700 26px/28px "Noto Sans CJK SC", sans-serif; color: #2b8ac6; letter-spacing: -.1px; white-space: nowrap; transform: skewX(-6deg); }
        .en { font: 14px/15px "Liberation Sans", sans-serif; color: #3e95cf; letter-spacing: .75px; margin: 1px 0 0 5px; white-space: nowrap; }
        .gray { position: absolute; left: -24px; top: 39px; font: 700 11.5px/14px "Liberation Sans", sans-serif; letter-spacing: .9px; color: rgba(90,90,90,.65); white-space: nowrap; }
    </style>
    <div class="inner">
        <svg viewBox="0 0 50 52">
            <circle cx="24" cy="24" r="20" fill="#1e78c6"/>
            <circle cx="24" cy="24" r="16" fill="#2c9be0"/>
            <circle cx="26" cy="21" r="13" fill="#fff"/>
            <path d="M5 14C0 30 12 50 30 47c11-2 17-11 17-20 -3 8-11 15-22 14C14 40 6 28 5 14z" fill="#f4b92a"/>
            <path d="M39 6c6 5 9 13 7 22-2 5-5 9-9 12 6-9 6-23 2-34z" fill="#f6c94a"/>
        </svg>
        <div class="txt">
            <div class="cn">久友下载站</div>
            <div class="en">Www.9UPK.Com</div>
        </div>
    </div>
    <div class="gray">WWW.9UPK.COM</div>
`);

// red-arrow, the hand drawn pointer to the menu
shadowElement("red-arrow", /*html*/`
    <style>
        :host { position: absolute; left: 530px; top: 28px; width: 44px; height: 78px; pointer-events: none; }
        svg { display: block; width: 100%; height: 100%; overflow: visible; }
    </style>
    <svg viewBox="0 0 44 78">
        <path d="M39 5 10 66" stroke="#999" stroke-width="2" opacity=".5" transform="translate(1.5 1)"/>
        <path d="M38 4 11 62" stroke="#e8141c" stroke-width="2"/>
        <path d="M7 73 6 58 17 63z" fill="#e8141c"/>
    </svg>
`);
</script>
</body>
</html>
